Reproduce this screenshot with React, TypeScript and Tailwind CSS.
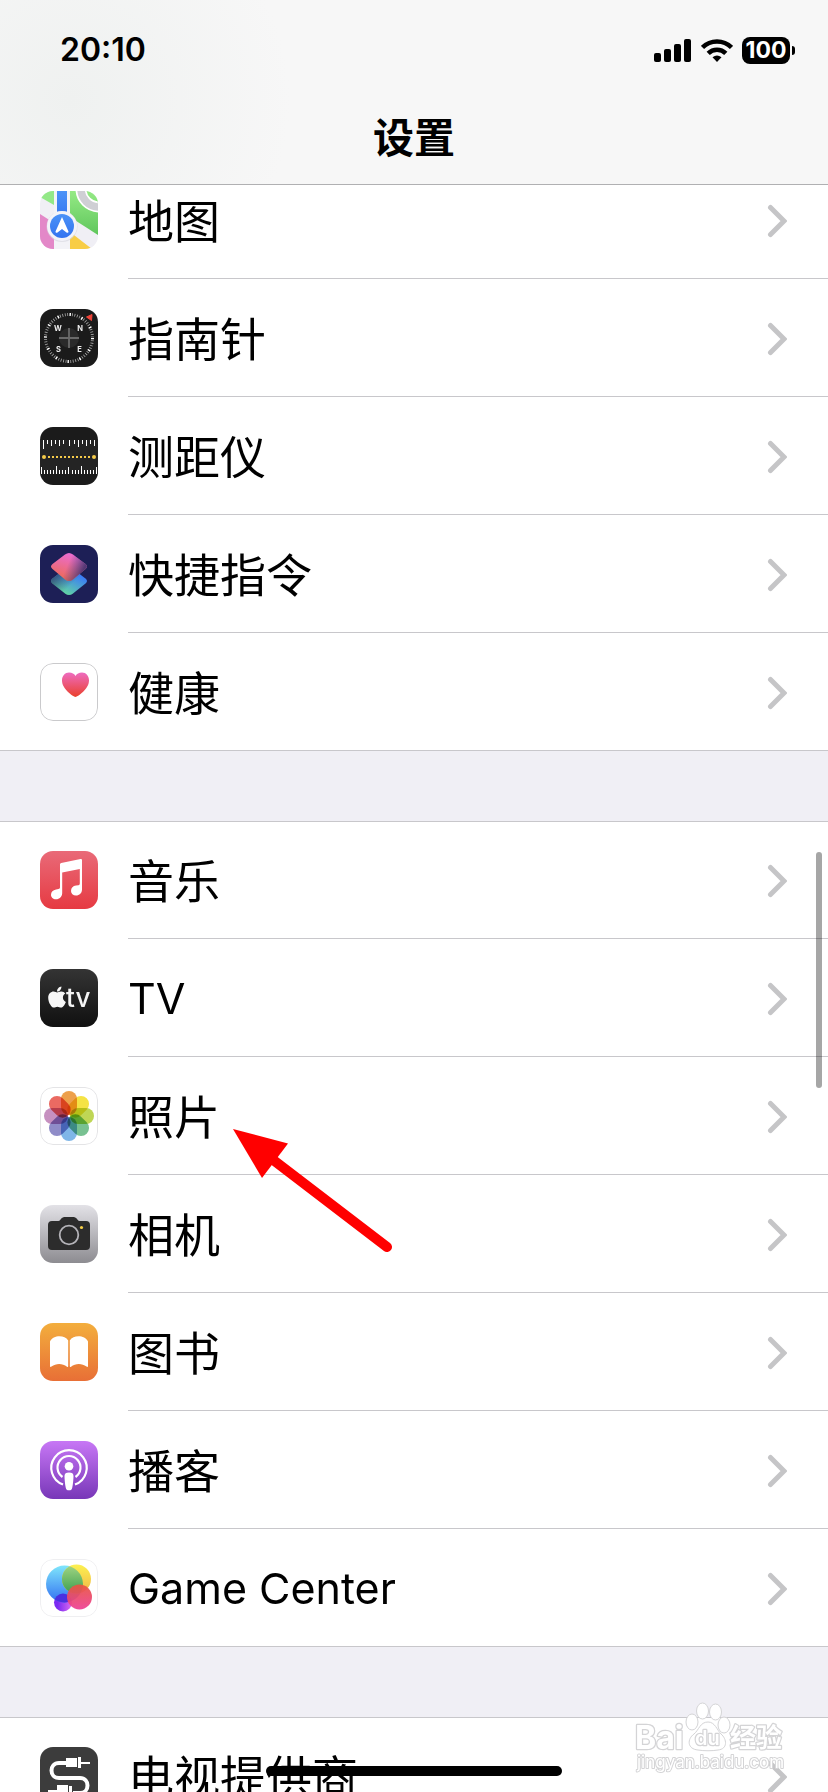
import React, {FC, ReactNode} from "react";
import {FaApple} from "react-icons/fa";

type Item = {
    id: string;
    label: string;
    icon: ReactNode;
    latin?: boolean;
};

const Tile: FC<{ fill: string; border?: string; children?: ReactNode }> = ({fill, border, children}) => (
    <svg viewBox="0 0 58 58" className="h-[58px] w-[58px] shrink-0 rounded-[13px]" aria-hidden="true">
        <rect width="58" height="58" fill={fill}/>
        {children}
        {border && <rect x="0.5" y="0.5" width="57" height="57" rx="12.5" fill="none" stroke={border}/>}
    </svg>
);

const MapsIcon: FC = () => (
    <Tile fill="#f0eff5">
        <defs>
            <linearGradient id="maps-green" x1="0" y1="0" x2="0" y2="1">
                <stop offset="0" stopColor="#95ea85"/>
                <stop offset="1" stopColor="#5fc65c"/>
            </linearGradient>
            <linearGradient id="maps-blue" x1="0" y1="0" x2="0" y2="1">
                <stop offset="0" stopColor="#4b92f7"/>
                <stop offset="1" stopColor="#3373f0"/>
            </linearGradient>
        </defs>
        <path d="M0 0H14V14L0 6Z" fill="#93e887"/>
        <path d="M0 23L14 32V58H0Z" fill="#e388c8"/>
        <path d="M30 0H58V44L30 26Z" fill="url(#maps-green)"/>
        <circle cx="59" cy="-2" r="18" fill="none" stroke="#fff" strokeWidth="11"/>
        <circle cx="59" cy="-2" r="18" fill="none" stroke="#cfcfd4" strokeWidth="7.5"/>
        <path d="M30 41L52 58H30Z" fill="#f8cd45"/>
        <rect x="14" width="16" height="58" fill="#f3f3f7"/>
        <rect x="17" width="10" height="30" fill="url(#maps-blue)"/>
        <circle cx="22" cy="35.5" r="15.5" fill="#d5d5de" opacity="0.6"/>
        <circle cx="22" cy="35" r="15" fill="#f3f3f9"/>
        <circle cx="22" cy="35" r="12" fill="url(#maps-blue)"/>
        <path d="M22 26L28.5 40.5Q28.500 42.500 26.500 41.500L22 38L17.500 41.500Q15.500 42.500 15.500 40.500Z" fill="#fff"/>
    </Tile>
);

const CompassIcon: FC = () => (
    <Tile fill="#1b1b1b">
        <circle cx="29" cy="29" r="23.500" fill="none" stroke="#aaa" strokeWidth="3" strokeDasharray="0.8 1.660"/>
        <circle cx="29" cy="29" r="23.500" fill="none" stroke="#fff" strokeWidth="3" strokeDasharray="1.300 11"/>
        <circle cx="29" cy="29" r="10" fill="#2a2a2a"/>
        <path d="M19 29H39M29 19V39" stroke="#6a6a6a" strokeWidth="1.800"/>
        <path d="M46.500 8L52 5.500L51.500 11.500Z" fill="#f0453a" stroke="#f0453a"/>
        <g fill="#eee" fontSize="7.500" fontWeight="700" textAnchor="middle" fontFamily="Inter, sans-serif">
            <text x="18" y="21.500">W</text>
            <text x="40" y="21.500">N</text>
            <text x="18.500" y="42.500">S</text>
            <text x="39.500" y="42.500">E</text>
        </g>
    </Tile>
);

const MeasureIcon: FC = () => (
    <Tile fill="#1b1b1b">
        <rect y="13" width="58" height="34" fill="#242424"/>
        <path d="M3.500 13V22M7.500 13V17M11.500 13V19M15.500 13V17M19.500 13V19M23.500 13V17M29.500 13V19M34.500 13V17M38.500 13V20M42.500 13V17M46.500 13V19M50.500 13V17M54.500 13V19" stroke="#fff"/>
        <path d="M1.500 40V47M4.500 43V47M7.500 43V47M10.500 43V47M13.500 43V47M16.500 39V47M19.500 43V47M22.500 43V47M25.500 43V47M28.500 40V47M32.500 43V47M35.500 43V47M38.500 43V47M41.500 39V47M44.500 43V47M47.500 43V47M50.500 43V47M53.500 43V47M56.500 40V47" stroke="#fff"/>
        <path d="M8 30H51" stroke="#f5cb4a" strokeWidth="2" strokeDasharray="2 2"/>
        <circle cx="4" cy="30" r="2" fill="#f5cb4a"/>
        <circle cx="54" cy="30" r="2" fill="#f5cb4a"/>
    </Tile>
);

const ShortcutsIcon: FC = () => (
    <Tile fill="#1d1f56">
        <defs>
            <linearGradient id="sc-low" x1="0.300" y1="1" x2="0.800" y2="0.300">
                <stop offset="0" stopColor="#66dd9a"/>
                <stop offset="1" stopColor="#3b7df5"/>
            </linearGradient>
            <linearGradient id="sc-shade" x1="0" y1="0.300" x2="0.500" y2="0.700">
                <stop offset="0" stopColor="#2c3b6c" stopOpacity="0.900"/>
                <stop offset="1" stopColor="#2c3b6c" stopOpacity="0"/>
            </linearGradient>
            <linearGradient id="sc-top" x1="0.600" y1="0" x2="0.300" y2="0.900">
                <stop offset="0" stopColor="#ea6cd6"/>
                <stop offset="1" stopColor="#ee6a5a"/>
            </linearGradient>
            <linearGradient id="sc-fade" x1="0.450" y1="0.450" x2="0.900" y2="0.600">
                <stop offset="0" stopColor="#4a4390" stopOpacity="0"/>
                <stop offset="1" stopColor="#3a2f6c" stopOpacity="0.850"/>
            </linearGradient>
        </defs>
        <path d="M25 24Q29 21 33 24L45.500 33.500Q48.500 36 45.500 38.500L33 48.500Q29 51.500 25 48.500L12.500 38.500Q9.500 36 12.500 33.500Z" fill="url(#sc-low)"/>
        <path d="M25 24Q29 21 33 24L45.500 33.500Q48.500 36 45.500 38.500L33 48.500Q29 51.500 25 48.500L12.500 38.500Q9.500 36 12.500 33.500Z" fill="url(#sc-shade)"/>
        <path d="M25 9.500Q29 6.500 33 9.500L45.500 19Q48.500 21.500 45.500 24L33 34.500Q29 37.500 25 34.500L12.500 24Q9.500 21.500 12.500 19Z" fill="url(#sc-top)"/>
        <path d="M25 9.500Q29 6.500 33 9.500L45.500 19Q48.500 21.500 45.500 24L33 34.500Q29 37.500 25 34.500L12.500 24Q9.500 21.500 12.500 19Z" fill="url(#sc-fade)"/>
    </Tile>
);

const HealthIcon: FC = () => (
    <Tile fill="#fff" border="#cacacc">
        <defs>
            <linearGradient id="heart" x1="0" y1="0" x2="0" y2="1">
                <stop offset="0" stopColor="#ee6cc0"/>
                <stop offset="1" stopColor="#ea402c"/>
            </linearGradient>
        </defs>
        <path d="M35.500 34C33 33.500 22 26 22 17.500C22 13 25 9.500 29 9.500C32 9.500 34.500 11 35.500 13C36.500 11 39 9.500 42 9.500C46 9.500 49 13 49 17.500C49 26 38 33.500 35.500 34Z" fill="url(#heart)"/>
    </Tile>
);

const MusicIcon: FC = () => (
    <Tile fill="url(#music)">
        <defs>
            <linearGradient id="music" x1="0" y1="0" x2="0" y2="1">
                <stop offset="0" stopColor="#e96a78"/>
                <stop offset="1" stopColor="#e63a42"/>
            </linearGradient>
        </defs>
        <path d="M20 13.500Q20 12.300 21.200 12L40.500 8Q42 7.700 42 9V38.500C42 42 39.500 44.500 36 44.500C33 44.500 31 42.500 31 40C31 37 33 35 36 34.600L38.500 34.200Q39.800 34 39.800 32.500V18L22.200 21.500V42C22.200 45.500 19.500 48.300 16 48.300C13 48.300 11 46.300 11 43.700C11 41 13 39 16 38.500L18.500 38.100Q20 37.900 20 36.500Z" fill="#fff"/>
    </Tile>
);

const TvIcon: FC = () => (
    <Tile fill="url(#tv)">
        <defs>
            <linearGradient id="tv" x1="0" y1="0" x2="0" y2="1">
                <stop offset="0" stopColor="#343434"/>
                <stop offset="1" stopColor="#101010"/>
            </linearGradient>
        </defs>
        <FaApple size={24} x={5} y={16} color="#f7f7f7"/>
        <text x="26" y="38" fill="#f5f5f5" fontSize="26" fontWeight="500" fontFamily="Inter, sans-serif">tv</text>
    </Tile>
);

const petals = ["#eda04c", "#f5e345", "#bfd655", "#78c191", "#7fb6e8", "#8f8cc8", "#c690c0", "#ea6a62"];

const PhotosIcon: FC = () => (
    <Tile fill="#fff" border="#e4e4e6">
        {petals.map((color, i) => (
            <rect
                key={color}
                x="21"
                y="4"
                width="16"
                height="24"
                rx="8"
                fill={color}
                transform={`rotate(${i * 45} 29 29)`}
                className="mix-blend-multiply"
            />
        ))}
    </Tile>
);

const CameraIcon: FC = () => (
    <Tile fill="url(#camera)">
        <defs>
            <linearGradient id="camera" x1="0" y1="0" x2="0" y2="1">
                <stop offset="0" stopColor="#e3e2e7"/>
                <stop offset="1" stopColor="#8d8c91"/>
            </linearGradient>
        </defs>
        <path d="M12 16H18.500C20.500 16 21 12 24.500 12H33.500C37 12 37.500 16 39.500 16H46Q50 16 50 20V41Q50 45 46 45H12Q8 45 8 41V20Q8 16 12 16Z" fill="#2c2c2c"/>
        <circle cx="29" cy="30" r="9.300" fill="#2c2c2c" stroke="#b4b3b8" strokeWidth="1.800"/>
        <circle cx="41.500" cy="22.500" r="1.600" fill="#f7cf46"/>
    </Tile>
);

const BooksIcon: FC = () => (
    <Tile fill="url(#books)">
        <defs>
            <linearGradient id="books" x1="0" y1="0" x2="0" y2="1">
                <stop offset="0" stopColor="#f3ae3d"/>
                <stop offset="1" stopColor="#e86f36"/>
            </linearGradient>
        </defs>
        <path d="M28.200 17.500V43Q28.200 44.500 27 43.700C22.500 40 16 40 11.500 43.500Q10 44.500 10 43V18.500C13 12 24.500 11.500 28.200 17.500Z" fill="#fff"/>
        <path d="M29.800 17.500V43Q29.800 44.500 31 43.700C35.500 40 42 40 46.500 43.500Q48 44.500 48 43V18.500C45 12 33.500 11.500 29.800 17.500Z" fill="#fff"/>
    </Tile>
);

const PodcastsIcon: FC = () => (
    <Tile fill="url(#podcasts)">
        <defs>
            <linearGradient id="podcasts" x1="0" y1="0" x2="0" y2="1">
                <stop offset="0" stopColor="#c777f5"/>
                <stop offset="1" stopColor="#7837b8"/>
            </linearGradient>
        </defs>
        <path d="M23 43.500A17.700 17.700 0 1 1 35 43.500" fill="none" stroke="#fff" strokeWidth="2.200"/>
        <path d="M22.500 36A11.500 11.500 0 1 1 35.500 36" fill="none" stroke="#fff" strokeWidth="2.200"/>
        <circle cx="29" cy="25.300" r="4.300" fill="#fff"/>
        <path d="M24.500 35C24.500 32.500 26 31.500 29 31.500S33.500 32.500 33.500 35C33.500 38 33 43 32.300 46.500C32 48.500 31 49.300 29 49.300S26 48.500 25.700 46.500C25 43 24.500 38 24.500 35Z" fill="#fff"/>
    </Tile>
);

const GameCenterIcon: FC = () => (
    <Tile fill="#fff" border="#efeff1">
        <defs>
            <linearGradient id="gc-blue" x1="0" y1="0" x2="0" y2="1">
                <stop offset="0" stopColor="#7fe6fb"/>
                <stop offset="1" stopColor="#3270f2"/>
            </linearGradient>
            <linearGradient id="gc-yellow" x1="0" y1="0" x2="0" y2="1">
                <stop offset="0" stopColor="#fcf150"/>
                <stop offset="1" stopColor="#f0b548"/>
            </linearGradient>
            <linearGradient id="gc-green" x1="0" y1="0" x2="0" y2="1">
                <stop offset="0" stopColor="#a4d684"/>
                <stop offset="1" stopColor="#3d9f50"/>
            </linearGradient>
            <linearGradient id="gc-red" x1="0" y1="0" x2="0" y2="1">
                <stop offset="0" stopColor="#e8553f"/>
                <stop offset="1" stopColor="#ee3f96"/>
            </linearGradient>
            <linearGradient id="gc-purple" x1="0" y1="0" x2="1" y2="0">
                <stop offset="0.200" stopColor="#7a2af2"/>
                <stop offset="1" stopColor="#dc6cf0"/>
            </linearGradient>
            <clipPath id="gc-clip">
                <circle cx="24.500" cy="25" r="18.500"/>
            </clipPath>
        </defs>
        <circle cx="23" cy="43.500" r="9" fill="url(#gc-purple)"/>
        <circle cx="24.500" cy="25" r="18.500" fill="url(#gc-blue)"/>
        <circle cx="36.500" cy="20" r="14.500" fill="url(#gc-yellow)"/>
        <circle cx="36.500" cy="20" r="14.500" fill="url(#gc-green)" clipPath="url(#gc-clip)"/>
        <circle cx="23" cy="43.500" r="9" fill="#4a2fe0" clipPath="url(#gc-clip)"/>
        <circle cx="39.500" cy="38" r="12.500" fill="url(#gc-red)" opacity="0.930"/>
    </Tile>
);

const ProviderIcon: FC = () => (
    <Tile fill="#3c3c3c">
        <path d="M26 16H19C9 16 9 31 19 31H40C50 31 50 46 40 46H33" fill="none" stroke="#fff" strokeWidth="4"/>
        <path d="M26 11H37V20H26ZM38 10H41V21H38ZM41 15H50V17H41Z" fill="#fff"/>
        <path d="M17 38H28V49H17ZM29 39H32V50H29ZM8 43H17V45H8Z" fill="#fff"/>
    </Tile>
);

const groups: Item[][] = [
    [
        {id: "maps", label: "地图", icon: <MapsIcon/>},
        {id: "compass", label: "指南针", icon: <CompassIcon/>},
        {id: "measure", label: "测距仪", icon: <MeasureIcon/>},
        {id: "shortcuts", label: "快捷指令", icon: <ShortcutsIcon/>},
        {id: "health", label: "健康", icon: <HealthIcon/>},
    ],
    [
        {id: "music", label: "音乐", icon: <MusicIcon/>},
        {id: "tv", label: "TV", icon: <TvIcon/>, latin: true},
        {id: "photos", label: "照片", icon: <PhotosIcon/>},
        {id: "camera", label: "相机", icon: <CameraIcon/>},
        {id: "books", label: "图书", icon: <BooksIcon/>},
        {id: "podcasts", label: "播客", icon: <PodcastsIcon/>},
        {id: "game-center", label: "Game Center", icon: <GameCenterIcon/>, latin: true},
    ],
    [
        {id: "tv-provider", label: "电视提供商", icon: <ProviderIcon/>},
    ],
];

const Row: FC<{ item: Item; last: boolean }> = ({item, last}) => (
    <li>
        <a href={`#${item.id}`} className="flex h-[118px] items-center pl-10">
            {item.icon}
            <span className={`ml-[30px] flex flex-1 items-center justify-between self-stretch border-b pt-0.5 pr-[41px] ${last ? "border-transparent" : "border-[#c8c7cb]"}`}>
                <span className={item.latin ? "text-[43px]" : "text-[46px]"}>{item.label}</span>
                <svg viewBox="0 0 20 34" className="h-[34px] w-5" fill="none" stroke="#c5c5c7" strokeWidth="5" strokeLinecap="round" aria-hidden="true">
                    <path d="M3.500 3.500L17 17L3.500 30.500"/>
                </svg>
            </span>
        </a>
    </li>
);

const StatusBar: FC = () => (
    <div className="flex h-[100px] items-center justify-between pl-[60px] pr-[33px]">
        <span className="text-[32px] leading-none font-semibold">20:10</span>
        <div className="flex items-center gap-[9px]">
            <svg viewBox="0 0 38 24" className="h-6 w-[38px]" aria-hidden="true">
                <rect x="0" y="15" width="7" height="9" rx="2"/>
                <rect x="10" y="11" width="7" height="13" rx="2"/>
                <rect x="20" y="6" width="7" height="18" rx="2"/>
                <rect x="30" y="1" width="7" height="23" rx="2"/>
            </svg>
            <svg viewBox="0 0 32 24" className="h-6 w-8" fill="none" stroke="#000" strokeWidth="4.500" aria-hidden="true">
                <path d="M1.500 9.500A20.500 20.500 0 0 1 30.500 9.500"/>
                <path d="M7.200 15.400A12.400 12.400 0 0 1 24.800 15.400"/>
                <path d="M16 24L11.500 19.300Q16 15.800 20.500 19.300Z" fill="#000" stroke="none"/>
            </svg>
            <div className="flex items-center gap-0.5">
                <span className="flex h-[27px] w-12 items-center justify-center rounded-lg bg-black text-[23px] leading-none font-bold text-white">100</span>
                <span className="h-[9px] w-[3px] rounded-r-full bg-black"/>
            </div>
        </div>
    </div>
);

const Watermark: FC = () => (
    <svg viewBox="0 0 150 74" className="absolute right-[43px] bottom-[17px] h-[74px] w-[150px]" fill="#fff" stroke="#d4d4d6" aria-hidden="true">
        <ellipse cx="57" cy="21" rx="6" ry="8"/>
        <ellipse cx="67.500" cy="10" rx="6" ry="8"/>
        <ellipse cx="80.500" cy="11" rx="6" ry="8"/>
        <ellipse cx="89" cy="24" rx="6" ry="8"/>
        <path d="M73 21C80 21 82 29 86 33C92 38 93 48 83 49C77 50 69 50 63 49C52 48 52 38 59 33C64 29 65 21 73 21Z"/>
        <g strokeWidth="2.500" paintOrder="stroke" strokeLinejoin="round" fontFamily="Inter, 'Noto Sans CJK SC', sans-serif">
            <text x="0" y="48" fontSize="32" fontWeight="700">Bai</text>
            <text x="60" y="44" fontSize="20" fontWeight="600">du</text>
            <text x="95" y="46" fontSize="26" fontWeight="700">经验</text>
            <text x="2" y="67" fontSize="17" strokeWidth="2">jingyan.baidu.com</text>
        </g>
    </svg>
);

export default function App() {
    return (
        <div className="relative flex h-screen flex-col overflow-hidden bg-[#f0eff5] font-[Inter,'Noto_Sans_CJK_SC',sans-serif] text-black">
            <header className="relative z-10 shrink-0 border-b border-[#b0b0b2] bg-[#f7f7f7] bg-[radial-gradient(circle_at_70px_100px,#eff1f0,#f7f7f7_220px)]">
                <StatusBar/>
                <h1 className="h-[84px] text-center text-[41px] leading-[76px] font-semibold">设置</h1>
            </header>
            <main className="-mt-6 flex flex-col gap-[70px] leading-none">
                {groups.map((items, i) => (
                    <ul
                        key={i}
                        className="relative bg-white after:pointer-events-none after:absolute after:inset-0 after:border-y after:border-[#c8c7cb]"
                    >
                        {items.map((item, n) => (
                            <Row key={item.id} item={item} last={n === items.length - 1}/>
                        ))}
                    </ul>
                ))}
            </main>
            <div className="absolute top-[852px] right-[6px] z-10 h-[236px] w-1.5 rounded-full bg-black/35"/>
            <svg viewBox="0 0 160 124" className="absolute top-[1128px] left-[232px] z-10 h-[124px] w-40" aria-hidden="true">
                <path d="M1 1L56 15.500L30 50Z" fill="#f00"/>
                <path d="M40 31L155 119" stroke="#f00" strokeWidth="10" strokeLinecap="round"/>
            </svg>
            <Watermark/>
            <div className="absolute bottom-4 left-1/2 z-10 h-2.5 w-[296px] -translate-x-1/2 rounded-full bg-black"/>
        </div>
    );
}
